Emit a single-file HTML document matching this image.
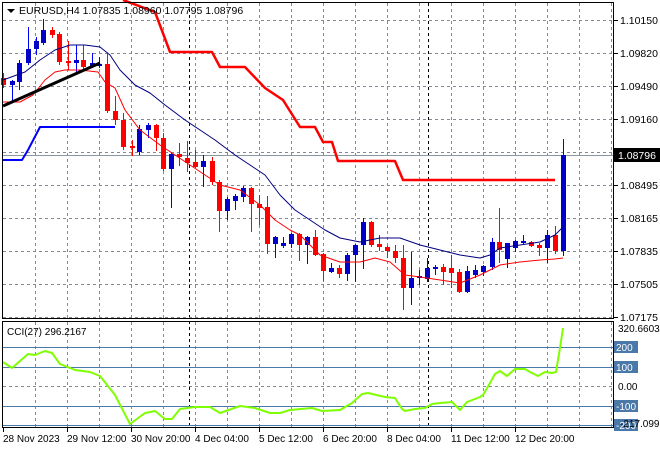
<!DOCTYPE html>
<html><head><meta charset="utf-8"><style>
html,body{margin:0;padding:0;background:#fff;}
svg{display:block;font-family:"Liberation Sans",sans-serif;font-size:10px;}
</style></head><body>
<svg id="s" width="660" height="450" xmlns="http://www.w3.org/2000/svg">
<rect width="660" height="450" fill="#fff"/>
<g id="grid"></g>
<g id="cand"></g>
<g id="ov"></g>
</svg>
<script>
var NS="http://www.w3.org/2000/svg",s=document.getElementById('s');
function el(t,a,p,txt){var e=document.createElementNS(NS,t);for(var k in a)e.setAttribute(k,a[k]);if(txt!=null)e.textContent=txt;(p||s).appendChild(e);return e;}
var g=document.getElementById('grid'),c=document.getElementById('cand'),o=document.getElementById('ov');
for(var x=35;x<612;x+=32){el('line',{x1:x+.5,y1:3,x2:x+.5,y2:318,stroke:'#7f8a96','stroke-dasharray':'3,3'},g);el('line',{x1:x+.5,y1:322,x2:x+.5,y2:427,stroke:'#7f8a96','stroke-dasharray':'3,3'},g);}
[189,428].forEach(function(x){el('line',{x1:x+.5,y1:3,x2:x+.5,y2:427,stroke:'#000','stroke-dasharray':'3,3'},g);});
var prices=['1.10150','1.09820','1.09490','1.09160','1.08825','1.08495','1.08165','1.07835','1.07505','1.07175'];
for(var i=0;i<10;i++){var y=20+i*33;el('line',{x1:3,y1:y+.5,x2:613,y2:y+.5,stroke:'#7f8a96','stroke-dasharray':'3,3'},g);el('line',{x1:614,y1:y+.5,x2:618,y2:y+.5,stroke:'#000'},g);if(i!=4)el('text',{x:620,y:y+4,fill:'#000','font-size':'10.5px'},g,prices[i]);}
[[347,'200'],[367,'100'],[406,'-100'],[425,'-200']].forEach(function(l){el('line',{x1:3,y1:l[0]+.5,x2:613,y2:l[0]+.5,stroke:'#4a78a8'},g);el('rect',{x:614,y:l[0]-6,width:24,height:12,fill:'#4a78a8'},g);el('text',{x:616,y:l[0]+4,fill:'#fff'},g,l[1]);});
el('line',{x1:3,y1:386.5,x2:613,y2:386.5,stroke:'#7f8a96','stroke-dasharray':'3,3'},g);
el('text',{x:618,y:390,fill:'#000'},g,'0.00');
el('text',{x:618,y:332,fill:'#000'},g,'320.6603');
el('text',{x:620,y:427,fill:'#000'},g,'-217.0991');
el('line',{x1:3,y1:155.5,x2:613,y2:155.5,stroke:'#8a96a2'},g);
el('rect',{x:614,y:148,width:46,height:14,fill:'#000'},g);
el('text',{x:618,y:159,fill:'#fff','font-size':'10.5px'},g,'1.08796');
var C=[[3,78,85,'r',73,88],[12,81,85,'b',80,103],[19,63,82,'b',60,90],[28,49,63,'b',27,65],[36,41,49,'b',37,55],[43,30,43,'b',19,45],[52,30,35,'r',27,38],[59,34,62,'r',32,65],[68,61,63,'r',41,70],[76,60,63,'b',45,75],[83,60,67,'r',45,70],[92,63,66,'b',53,68],[99,64,66,'b',57,68],
[107,64,111,'r',54,113],[115,111,120,'r',96,125],[123,120,147,'r',113,150],[132,146,148,'r',140,156],[139,129,152,'b',125,155],[148,125,130,'b',123,138],[156,125,138,'r',124,151],[163,138,169,'r',133,171],[171,154,169,'b',153,208],[179,154,157,'r',143,166],[187,158,163,'r',141,172],[195,162,167,'r',150,168],[203,161,167,'b',155,187],[212,161,182,'r',157,185],[219,182,211,'r',180,232],[227,199,211,'b',197,220],[235,196,201,'b',194,210],[243,188,197,'b',186,202],[251,188,204,'r',187,232],[259,204,208,'r',195,225],[267,207,244,'r',196,254],[275,237,244,'b',236,258],[283,243,246,'b',237,248],[291,234,244,'b',233,248],[299,234,245,'r',233,261],[307,237,245,'b',236,264],[315,237,255,'r',230,256],[323,254,271,'r',253,281],[331,268,272,'b',263,273],[339,268,274,'r',265,278],[347,255,274,'b',253,281],[355,245,255,'b',244,282],[363,222,245,'b',218,269],[371,222,245,'r',221,247],[379,244,247,'r',235,251],[387,247,251,'r',246,258],[395,251,258,'r',245,263],[403,258,288,'r',245,310],[411,278,288,'b',252,305],[419,276,278,'b',270,285],[427,268,279,'b',258,282],[435,267,269,'b',265,275],[443,267,272,'r',264,285],[451,268,273,'r',255,288],[459,272,292,'r',269,293],[467,271,292,'b',266,293],[475,270,275,'b',265,278],[483,266,272,'b',265,276],[492,242,267,'b',238,270],[499,242,250,'r',208,263],[507,243,259,'b',243,268],[515,241,248,'b',240,252],[523,241,243,'b',235,244],[531,242,246,'r',241,247],[539,245,248,'r',243,256],[547,235,248,'b',230,263],[555,235,251,'r',226,254],[563,155,251,'b',139,256]];
C.forEach(function(k){var col=k[3]=='r'?'#ff0000':'#0000c8';el('line',{x1:k[0]+.5,y1:k[4],x2:k[0]+.5,y2:k[5],stroke:k[3]=='r'?'#ff0000':'#0000ff'},c);el('rect',{x:k[0]-2,y:k[1],width:5,height:Math.max(2,k[2]-k[1]),fill:col},c);});
function pl(pts,col,w){el('polyline',{points:pts,fill:'none',stroke:col,'stroke-width':w,'stroke-linejoin':'round'},o);}
pl('3,80 25,72 40,60 55,50 70,45 85,45 100,47 110,55 120,70 135,85 150,93 165,105 185,120 200,130 215,140 235,155 250,165 265,175 280,195 295,210 310,220 325,230 340,238 360,242 380,238 400,238 420,245 440,250 460,255 480,258 490,255 500,248 520,245 540,242 555,235 563,227','#000080',1);
pl('3,102 20,102 33,95 45,80 55,72 65,70 80,70 98,72 105,82 115,88 125,110 140,130 160,145 175,155 190,165 205,175 220,185 240,190 260,205 275,220 290,230 300,235 310,245 320,255 340,262 360,262 375,258 390,262 405,275 420,277 440,280 460,283 480,275 500,265 520,262 540,260 555,259 563,258','#ff0000',1);
pl('123,0 155,12 170,52 212,52 220,67 245,67 265,88 283,100 300,127 315,127 323,142 332,142 338,161 395,161 403,180 555,180','#ff0000',2.5);
pl('3,160 22,160 28,150 40,127 115,127','#0000ff',2);
pl('3,106 100,63','#000',3);
pl('3,362 12,368 28,354 35,355 45,351 52,353 60,364 75,370 90,372 100,376 115,395 130,424 145,413 155,411 165,419 172,419 180,409 195,407 210,407 220,413 240,406 255,408 270,413 280,413 290,410 312,408 322,411 340,410 352,403 362,394 368,393 385,397 395,398 402,409 405,411 415,409 425,408 432,404 440,403 452,402 460,410 467,402 480,397 483,395 490,383 495,374 500,371 507,376 515,369 525,369 530,372 538,376 545,372 552,373 556,372 560,348 563,328','#7fff00',2);
el('rect',{x:2.5,y:2.5,width:611,height:316,fill:'none',stroke:'#000'},o);
el('rect',{x:2.5,y:321.5,width:611,height:106,fill:'none',stroke:'#000'},o);
el('path',{d:'M7 9 L15 9 L11 13 Z',fill:'#000'},o);
el('text',{x:19,y:14,fill:'#000','font-size':'10.5px'},o,'EURUSD,H4  1.07835 1.08960 1.07795 1.08796');
el('text',{x:7,y:335,fill:'#000'},o,'CCI(27) 296.2167');
[[3,'28 Nov 2023'],[67,'29 Nov 12:00'],[131,'30 Nov 20:00'],[195,'4 Dec 04:00'],[259,'5 Dec 12:00'],[323,'6 Dec 20:00'],[387,'8 Dec 04:00'],[451,'11 Dec 12:00'],[515,'12 Dec 20:00']].forEach(function(t){el('line',{x1:t[0]+.5,y1:428,x2:t[0]+.5,y2:432,stroke:'#000'},o);el('text',{x:t[0],y:442,fill:'#000'},o,t[1]);});
</script>
</body></html>
